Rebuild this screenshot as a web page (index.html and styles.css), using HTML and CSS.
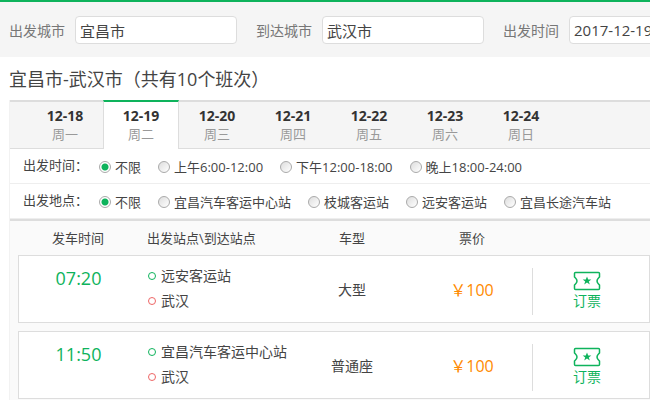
FILE: index.html
```html
<!DOCTYPE html>
<html lang="zh-CN">
<head>
    <meta charset="UTF-8">
    <meta name="viewport" content="width=device-width, initial-scale=1.0">
    <title>宜昌市-武汉市 汽车票</title>
    <link rel="stylesheet" href="styles.css">
</head>
<body>
    <form class="search-bar">
        <div class="field">
            <label for="from-city">出发城市</label>
            <input type="text" id="from-city" value="宜昌市">
        </div>
        <div class="field">
            <label for="to-city">到达城市</label>
            <input type="text" id="to-city" value="武汉市">
        </div>
        <div class="field">
            <label for="depart-date">出发时间</label>
            <input type="text" id="depart-date" value="2017-12-19">
        </div>
    </form>

    <main>
        <h1>宜昌市-武汉市（共有10个班次）</h1>

        <div class="panel">
            <nav class="date-tabs">
                <a href="#" class="tab"><b>12-18</b><span>周一</span></a>
                <a href="#" class="tab active"><b>12-19</b><span>周二</span></a>
                <a href="#" class="tab"><b>12-20</b><span>周三</span></a>
                <a href="#" class="tab"><b>12-21</b><span>周四</span></a>
                <a href="#" class="tab"><b>12-22</b><span>周五</span></a>
                <a href="#" class="tab"><b>12-23</b><span>周六</span></a>
                <a href="#" class="tab"><b>12-24</b><span>周日</span></a>
            </nav>

            <div class="filter" role="radiogroup" aria-labelledby="time-title">
                <span class="filter-title" id="time-title">出发时间：</span>
                <label><input type="radio" name="time" checked>不限</label>
                <label><input type="radio" name="time">上午6:00-12:00</label>
                <label><input type="radio" name="time">下午12:00-18:00</label>
                <label><input type="radio" name="time">晚上18:00-24:00</label>
            </div>
            <div class="filter" role="radiogroup" aria-labelledby="place-title">
                <span class="filter-title" id="place-title">出发地点：</span>
                <label><input type="radio" name="place" checked>不限</label>
                <label><input type="radio" name="place">宜昌汽车客运中心站</label>
                <label><input type="radio" name="place">枝城客运站</label>
                <label><input type="radio" name="place">远安客运站</label>
                <label><input type="radio" name="place">宜昌长途汽车站</label>
            </div>

            <div class="list">
                <table>
                    <thead>
                        <tr>
                            <th class="col-time">发车时间</th>
                            <th class="col-station">出发站点\到达站点</th>
                            <th class="col-type">车型</th>
                            <th class="col-price">票价</th>
                            <th class="col-book"></th>
                        </tr>
                    </thead>
                    <tbody>
                        <tr>
                            <td class="time">07:20</td>
                            <td class="stations">
                                <div class="stop start">远安客运站</div>
                                <div class="stop end">武汉</div>
                            </td>
                            <td>大型</td>
                            <td class="price">￥100</td>
                            <td class="book">
                                <a href="#">
                                    <svg width="28" height="20" viewBox="0 0 28 20">
                                        <path d="M2.500 1.500h23q1 0 1 1v3.500l-1 1q-3 3 0 6l1 1v3.500q0 1-1 1h-23q-1 0-1-1v-3.500l1-1q3-3 0-6l-1-1v-3.500q0-1 1-1z" fill="none" stroke="#0eb35c" stroke-width="1.500" stroke-linejoin="round"/>
                                        <path d="M14 5.500l1.200 3h3.100l-2.500 1.900 1 3.100-2.800-1.900-2.800 1.900 1-3.100-2.500-1.900h3.100z" fill="#0eb35c"/>
                                    </svg>
                                    <span>订票</span>
                                </a>
                            </td>
                        </tr>
                        <tr>
                            <td class="time">11:50</td>
                            <td class="stations">
                                <div class="stop start">宜昌汽车客运中心站</div>
                                <div class="stop end">武汉</div>
                            </td>
                            <td>普通座</td>
                            <td class="price">￥100</td>
                            <td class="book">
                                <a href="#">
                                    <svg width="28" height="20" viewBox="0 0 28 20">
                                        <path d="M2.500 1.500h23q1 0 1 1v3.500l-1 1q-3 3 0 6l1 1v3.500q0 1-1 1h-23q-1 0-1-1v-3.500l1-1q3-3 0-6l-1-1v-3.500q0-1 1-1z" fill="none" stroke="#0eb35c" stroke-width="1.500" stroke-linejoin="round"/>
                                        <path d="M14 5.500l1.200 3h3.100l-2.500 1.900 1 3.100-2.800-1.900-2.800 1.900 1-3.100-2.500-1.900h3.100z" fill="#0eb35c"/>
                                    </svg>
                                    <span>订票</span>
                                </a>
                            </td>
                        </tr>
                    </tbody>
                </table>
            </div>
        </div>
    </main>
</body>
</html>
```
FILE: styles.css
```css
* {
    box-sizing: border-box;
}

body {
    margin: 0;
    font-family: "Open Sans", "Noto Sans CJK SC", sans-serif;
    font-size: 14px;
    color: #444;
    background-color: #fff;
}

a {
    color: inherit;
    text-decoration: none;
}

/* search bar */
.search-bar {
    display: flex;
    gap: 19px;
    padding: 14px 0 13px 9px;
    background-color: #f5f5f5;
    border-top: 2px solid #0eb35c;
    overflow: hidden;
}

.field {
    display: flex;
    flex-shrink: 0;
    align-items: center;
    gap: 10px;
    color: #777;
}

.field input {
    width: 162px;
    height: 28px;
    padding: 0 4px;
    border: 1px solid #ddd;
    border-radius: 4px;
    background-color: #fff;
    font: inherit;
    font-size: 15px;
    color: #444;
}

main {
    padding-left: 9px;
}

h1 {
    margin: 0;
    padding: 8px 0 7px;
    font-size: 18px;
    font-weight: normal;
    line-height: 28px;
}

.panel {
    border-left: 1px solid #f2f2f2;
}

/* date tabs */
.date-tabs {
    display: flex;
    padding-left: 17px;
    background-color: #f5f5f5;
    box-shadow: inset 0 2px #ddd, inset 0 -1px #ddd;
}

.tab {
    display: flex;
    flex-direction: column;
    width: 76px;
    height: 49px;
    padding-top: 7px;
    text-align: center;
    line-height: 18px;
}

.tab b {
    color: #333;
}

.tab span {
    font-size: 13px;
    color: #999;
}

.tab.active {
    padding-top: 5px;
    background-color: #fff;
    border: 1px solid #ddd;
    border-top: 2px solid #0eb35c;
    border-bottom: none;
}

/* filters */
.filter {
    display: flex;
    align-items: center;
    gap: 17px;
    height: 35px;
    padding: 2px 0 0 13px;
    font-size: 13px;
    line-height: 18px;
    white-space: nowrap;
    border-bottom: 1px solid #eee;
}

.filter-title {
    width: 59px;
    padding-bottom: 5px;
}

.filter label {
    display: flex;
    align-items: center;
    gap: 4px;
}

.filter input {
    appearance: none;
    width: 12px;
    height: 12px;
    margin: 0;
    border: 1px solid #aaa;
    border-radius: 50%;
    background: linear-gradient(135deg, #ddd, #fff);
}

.filter input:checked {
    background: radial-gradient(circle, #0eb35c 3px, #fff 4px);
}

/* bus list */
.list {
    padding-left: 8px;
    background-color: #fafafa;
    border-top: 2px solid #ddd;
}

table {
    width: 100%;
    table-layout: fixed;
    border-collapse: separate;
    border-spacing: 0 8px;
}

th {
    height: 18px;
    padding: 0;
    font-size: 13px;
    font-weight: normal;
    line-height: 18px;
}

.col-time,
.col-type,
.col-price {
    width: 120px;
}

.col-book {
    width: 118px;
}

.col-station {
    padding-left: 9px;
    text-align: left;
}

td {
    height: 68px;
    padding: 0;
    text-align: center;
    background-color: #fff;
    border: 1px solid #ddd;
    border-width: 1px 0;
}

td:first-child {
    border-left-width: 1px;
}

td:last-child {
    border-right-width: 1px;
}

.time {
    padding-top: 8px;
    font-size: 18px;
    line-height: 28px;
    vertical-align: top;
    color: #0eb35c;
}

.stations {
    padding: 0 0 2px 10px;
    text-align: left;
}

.stop {
    display: flex;
    align-items: center;
    gap: 5px;
    line-height: 25px;
    white-space: nowrap;
}

.stop::before {
    content: "";
    width: 6px;
    height: 6px;
    border: 1px solid #0eb35c;
    border-radius: 50%;
}

.stop.end::before {
    border-color: #ee6666;
}

.price {
    font-size: 16px;
    color: #ff8a00;
}

.book {
    padding-top: 4px;
}

.book a {
    display: flex;
    flex-direction: column;
    align-items: center;
    padding: 3px 8px 4px 0;
    border-left: 1px solid #ddd;
    line-height: 20px;
    color: #0eb35c;
}
```
